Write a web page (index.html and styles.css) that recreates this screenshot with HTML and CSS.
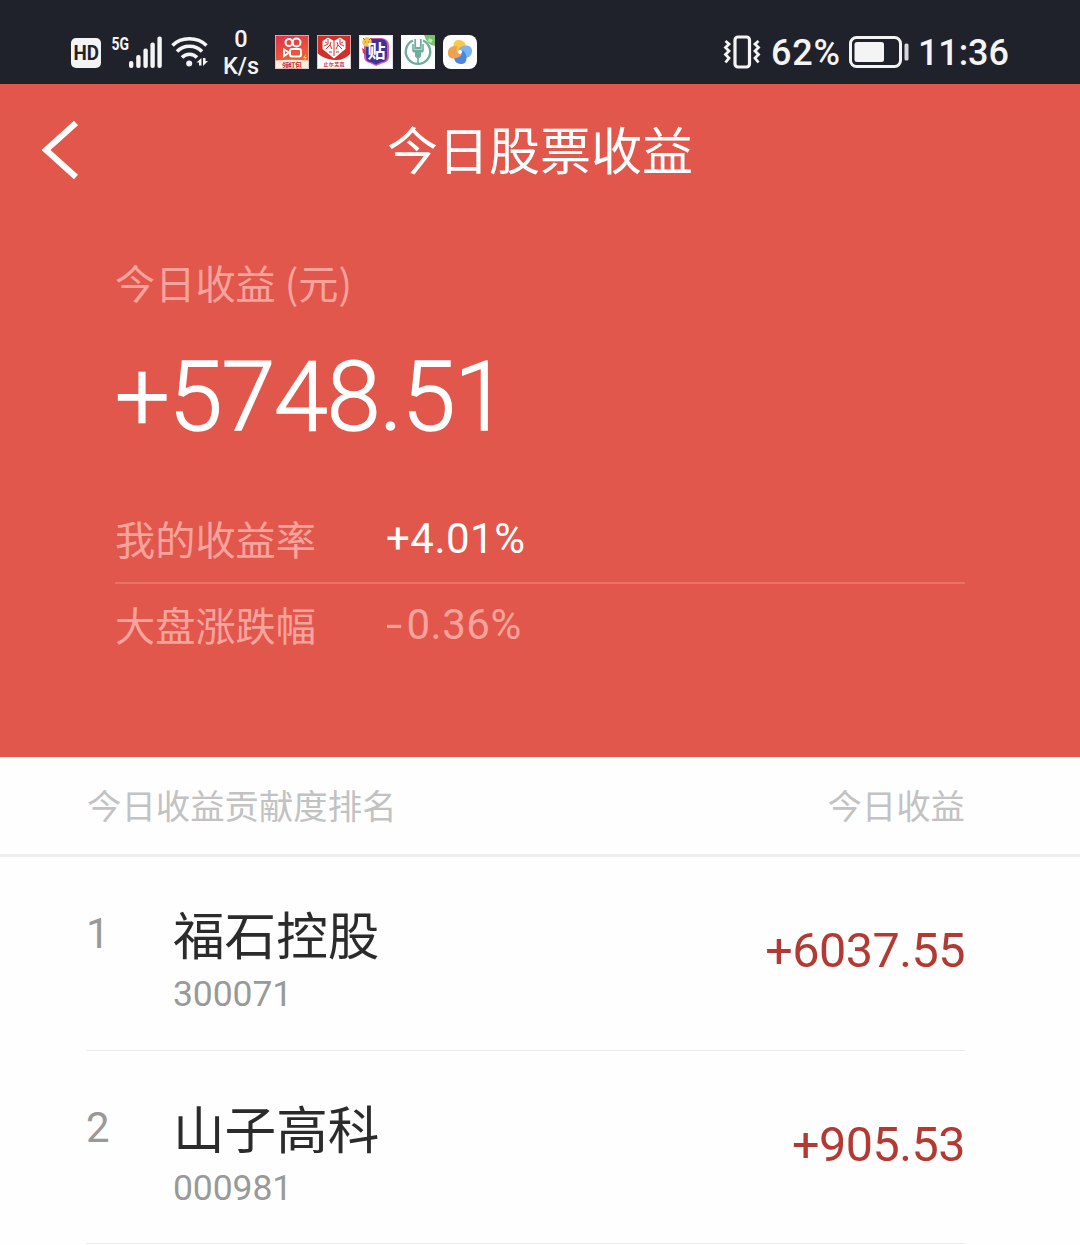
FILE: index.html
```html
<!DOCTYPE html>
<html lang="zh-CN">
<head>
  <meta charset="UTF-8">
  <title>今日股票收益</title>
  <link rel="stylesheet" href="styles.css">
</head>
<body>
  <div class="status-bar">
    <div class="status-left">
      <svg class="hd" width="32" height="32" viewBox="0 0 32 32">
        <rect x="1" y="1" width="30" height="30" rx="5" fill="#f4f4f4"/>
        <text x="3.5" y="23.2" class="hd-text" textLength="25.5" lengthAdjust="spacingAndGlyphs">HD</text>
      </svg>
      <svg class="signal" width="52" height="36" viewBox="0 0 52 36">
        <text x="0.5" y="16" class="net-text" textLength="17.5" lengthAdjust="spacingAndGlyphs">5G</text>
        <g fill="#f4f4f4">
          <rect x="18" y="27" width="4.4" height="7" rx="2"/>
          <rect x="25.2" y="21" width="4.4" height="13" rx="2"/>
          <rect x="32.4" y="14.5" width="4.4" height="19.5" rx="2"/>
          <rect x="39.4" y="8.5" width="4.4" height="25.5" rx="2"/>
          <rect x="46.4" y="2.5" width="4.4" height="31.5" rx="2"/>
        </g>
      </svg>
      <svg class="wifi" width="38" height="34" viewBox="0 0 38 34">
        <g fill="none" stroke="#f4f4f4" stroke-width="3.5">
          <path d="M1.5 10.500C10 1.5 26.500 1.5 35.500 10.500"/>
          <path d="M6 16.500C12.500 9.500 24.500 9.500 31 16.500"/>
          <path d="M11 22.500C15 18 22 18 26 22.500"/>
        </g>
        <circle cx="18.200" cy="28.500" r="3" fill="#f4f4f4"/>
        <path d="M30.500 30.500V23l-5 4.500h2.500v3zM32 23v8l5-5h-2.500v-3z" fill="#f4f4f4"/>
      </svg>
      <div class="speed">
        <span>0</span>
        <span>K/s</span>
      </div>
      <div class="apps">
        <!-- video app -->
        <svg width="34" height="34" viewBox="0 0 34 34">
          <defs>
            <linearGradient id="video" x1="0" y1="0" x2="0.3" y2="1">
              <stop offset="0" stop-color="#df304d"/>
              <stop offset="1" stop-color="#f26a2e"/>
            </linearGradient>
          </defs>
          <rect width="34" height="34" fill="url(#video)"/>
          <path d="M0 25.500Q17 24 34 25.500V34H0z" fill="#fbeedc"/>
          <g fill="none" stroke="#fff" stroke-width="2">
            <circle cx="14" cy="7.500" r="3.500"/>
            <circle cx="21.500" cy="7.500" r="4"/>
            <rect x="15" y="14" width="11" height="7.500" rx="2"/>
            <path d="M14 17.500l-5-3v6.500z"/>
          </g>
          <path d="M31 19l-3 4h2l-1 3 3-4h-2z" fill="#ffd84a"/>
          <text x="7" y="32.500" class="app-text" fill="#c42a25" textLength="20">领红包</text>
          <rect x=".5" y=".5" width="33" height="33" fill="none" stroke="#d9bfc0" stroke-width=".8"/>
        </svg>
        <!-- shopping app -->
        <svg width="34" height="34" viewBox="0 0 34 34">
          <rect width="34" height="34" fill="#d42e2a"/>
          <path d="M0 18Q7 24 17 25T34 18V34H0z" fill="#fff"/>
          <path d="M17 25L3 15V0H31V15z" fill="#d42e2a"/>
          <path d="M17 23.500L5.500 14V6l5.500-3.500 6 3.500 6-3.500 5.500 3.500v8z" fill="#fff"/>
          <path d="M17 6v15M11 4v5l-4 2M23 4v5l4 2M9 14l4-4 2 4M25 14l-4-4-2 4M12 17h3M19 17h3M8 7l2 1M26 7l-2 1M14 7l-1 3M20 7l1 3" fill="none" stroke="#d42e2a" stroke-width="1"/>
          <text x="6.500" y="31" class="app-text small" fill="#b83531" textLength="21">止尔芜芭</text>
          <rect x=".5" y=".5" width="33" height="33" fill="none" stroke="#d9bfc0" stroke-width=".8"/>
        </svg>
        <!-- forum app -->
        <svg width="34" height="34" viewBox="0 0 34 34">
          <rect width="34" height="34" fill="#fff"/>
          <path d="M11 3h12q7 1 7 8v10q0 6-6 7l-7 3-6-3q-6-1-6-7V10q0-6 6-7z" fill="#c85bb5"/>
          <path d="M11 4h11q6 0 6 7v10q0 6-6 6l-5 2.500-5-2.500q-5 0-5-6V11q0-7 4-7z" fill="#423199"/>
          <circle cx="8" cy="7" r="4.800" fill="#f3c74a"/>
          <path d="M4 3l2 2M12 3l-2 2M6 7h1M9 7h1" stroke="#b36f2c" stroke-width="1"/>
          <path d="M3 13l3 2 1 5-3-2z" fill="#db3543"/>
          <text x="8.500" y="22.500" class="forum-text">贴</text>
          <rect x=".5" y=".5" width="33" height="33" fill="none" stroke="#dcdce4" stroke-width=".8"/>
        </svg>
        <!-- bank app -->
        <svg width="34" height="34" viewBox="0 0 34 34">
          <rect width="34" height="34" fill="#fff"/>
          <path d="M23 0h11v11q-8-1-11-11z" fill="#76c26b"/>
          <path d="M28 3l4 2-2 3-3-2z" fill="#c3e8b8"/>
          <g fill="none" stroke="#6fae9f">
            <path d="M12 5.500A12.200 12.200 0 1 0 22 5.500" stroke-width="2.400"/>
            <path d="M14.200 4v9h5.600V4" stroke-width="1.800"/>
            <path d="M12 9v7.500M22 9v7.500M17 17v13" stroke-width="1.600"/>
          </g>
          <path d="M12 14.500h10v3h-2v4l-2 2h-2l-2-2v-4h-2z" fill="#6fae9f"/>
        </svg>
        <!-- pinwheel app -->
        <svg width="34" height="34" viewBox="0 0 34 34">
          <rect width="34" height="34" rx="8" fill="#fff"/>
          <path d="M14.500 19C9 15 9 5.500 15 5C21 4.500 24 9 22.500 14.500Q16 11 14.500 19z" fill="#f6c948"/>
          <path d="M15 14.500C19 9 28.500 9 29 15C29.500 21 25 24 19.500 22.500Q23 16 15 14.500z" fill="#79b5ee"/>
          <path d="M19.500 15C25 19 25 28.500 19 29C13 29.500 10 25 11.500 19.500Q18 23 19.500 15z" fill="#4b86df"/>
          <path d="M19 19.500C15 25 5.500 25 5 19C4.500 13 9 10 14.500 11.500Q11 18 19 19.500z" fill="#efa14f"/>
          <circle cx="17" cy="17" r="1.800" fill="#fff"/>
        </svg>
      </div>
    </div>
    <div class="status-right">
      <svg class="vibrate" width="38" height="34" viewBox="0 0 38 34">
        <g fill="none" stroke="#f4f4f4">
          <rect x="12" y="2" width="14.500" height="30" rx="3" stroke-width="3.200"/>
          <path d="M2.500 6L6 9 2.500 12.500 6 16l-3.500 3.500L6 23l-3.500 4.500M35.500 6L32 9l3.500 3.500L32 16l3.500 3.500L32 23l3.500 4.500" stroke-width="2.800"/>
        </g>
      </svg>
      <span class="battery-text">62%</span>
      <svg class="battery" width="60" height="32" viewBox="0 0 60 32">
        <rect x="1.500" y="1.500" width="50" height="29" rx="6" fill="none" stroke="#f4f4f4" stroke-width="3"/>
        <rect x="5.500" y="6" width="29.500" height="20" rx="2.500" fill="#f4f4f4"/>
        <rect x="55.500" y="7.500" width="4" height="17" rx="1.500" fill="#d8d8dc"/>
      </svg>
      <span class="clock">11:36</span>
    </div>
  </div>

  <div class="summary">
    <div class="title-bar">
      <svg class="back" width="40" height="62" viewBox="0 0 40 62">
        <path d="M36 4L6 31l30 27" fill="none" stroke="#fff" stroke-width="6"/>
      </svg>
      <h1>今日股票收益</h1>
    </div>
    <div class="profit">
      <p class="label">今日收益 (元)</p>
      <p class="total">+5748.51</p>
      <div class="rate">
        <span class="label">我的收益率</span>
        <span class="rate-value">+4.01%</span>
      </div>
      <div class="rate market">
        <span class="label">大盘涨跌幅</span>
        <span class="rate-value"><span class="minus">-</span>0.36%</span>
      </div>
    </div>
  </div>

  <div class="list-header">
    <span>今日收益贡献度排名</span>
    <span>今日收益</span>
  </div>
  <div class="list">
    <div class="stock">
      <span class="rank">1</span>
      <div class="stock-info">
        <div class="stock-name">福石控股</div>
        <div class="stock-code">300071</div>
      </div>
      <span class="stock-profit">+6037.55</span>
    </div>
    <div class="stock">
      <span class="rank">2</span>
      <div class="stock-info">
        <div class="stock-name">山子高科</div>
        <div class="stock-code">000981</div>
      </div>
      <span class="stock-profit">+905.53</span>
    </div>
  </div>
</body>
</html>
```
FILE: styles.css
```css
* {
  box-sizing: border-box;
}

body {
  margin: 0;
  background-color: #fefefe;
  font-family: Roboto, "Noto Sans CJK SC", sans-serif;
  overflow: hidden;
}

h1,
p {
  margin: 0;
  font-weight: 400;
}

svg {
  display: block;
  flex-shrink: 0;
  overflow: visible;
}

/* status bar */
.status-bar {
  display: flex;
  justify-content: space-between;
  height: 84px;
  padding: 20px 72px 0 70px;
  background-color: #1f222b;
  color: #f4f4f4;
}

.status-left,
.status-right {
  display: flex;
  align-items: center;
  height: 64px;
}

.hd {
  margin-top: 2px;
}

.hd-text {
  font-size: 21px;
  font-weight: 700;
  fill: #1f222b;
}

.net-text {
  font-size: 19px;
  font-weight: 700;
  fill: #f4f4f4;
}

.signal {
  margin-left: 9px;
}

.wifi {
  margin-left: 8px;
}

.speed {
  display: flex;
  flex-direction: column;
  align-items: center;
  width: 38px;
  margin-left: 13px;
  padding-top: 1px;
  font-size: 23.5px;
  font-weight: 500;
  line-height: 27px;
}

.apps {
  display: flex;
  gap: 8px;
  margin-left: 15px;
}

.app-text {
  font-family: "Noto Sans CJK SC", sans-serif;
  font-size: 7px;
  font-weight: 700;
}

.app-text.small {
  font-size: 5px;
}

.forum-text {
  font-family: "Noto Sans CJK SC", sans-serif;
  font-size: 18px;
  font-weight: 700;
  fill: #fff;
}

.battery-text,
.clock {
  font-size: 36px;
  font-weight: 500;
  line-height: 40px;
}

.battery-text {
  width: 70px;
  margin-left: 10px;
  padding-top: 2px;
  letter-spacing: 0.8px;
}

.battery {
  margin-left: 8px;
}

.clock {
  width: 90px;
  margin-left: 9px;
  padding-top: 2px;
  letter-spacing: -0.1px;
}

/* red summary block */
.summary {
  height: 673px;
  background-color: #e2574c;
  color: #fff;
}

.title-bar {
  display: flex;
  align-items: center;
  height: 132px;
  padding: 0 40px;
}

.title-bar h1 {
  flex: 1;
  margin-right: 40px;
  padding-bottom: 4px;
  font-family: "Noto Sans CJK SC", sans-serif;
  font-size: 51px;
  line-height: 60px;
  text-align: center;
}

.profit {
  padding: 36px 115px 0;
}

.label {
  font-family: "Noto Sans CJK SC", sans-serif;
  font-size: 40.2px;
  line-height: 60px;
  color: #f9a39d;
}

.total {
  margin-top: 25px;
  font-size: 97px;
  font-weight: 300;
  line-height: 120px;
  letter-spacing: -1.1px;
  -webkit-text-stroke: 1.4px #fff;
}

.rate {
  display: flex;
  align-items: center;
  height: 88px;
  margin-top: 39px;
  border-bottom: 2px solid #e8726a;
}

.rate .label {
  width: 271px;
  padding-bottom: 2px;
}

.rate-value {
  font-size: 42px;
  line-height: 60px;
  letter-spacing: 0.5px;
}

.market {
  height: 82px;
  margin-top: 0;
  border-bottom: none;
  color: #f9a39d;
}

.minus {
  display: inline-block;
  width: 20.5px;
  transform: scaleX(1.4);
  transform-origin: left;
}

/* stock list */
.list-header {
  display: flex;
  justify-content: space-between;
  align-items: center;
  height: 100px;
  padding: 0 115px 4px 87px;
  border-bottom: 3px solid #ededed;
  font-family: "Noto Sans CJK SC", sans-serif;
  font-size: 34.4px;
  color: #c2c2c2;
}

.list {
  padding: 0 115px 0 86px;
}

.stock {
  display: flex;
  height: 194px;
  border-bottom: 1px solid #ececec;
}

.stock + .stock {
  height: 193px;
}

.rank {
  width: 87px;
  margin-top: 47px;
  font-size: 42px;
  line-height: 60px;
  color: #999;
}

.stock-info {
  flex: 1;
  padding-top: 41px;
}

.stock-name {
  font-family: "Noto Sans CJK SC", sans-serif;
  font-size: 51.6px;
  line-height: 70px;
  color: #2b2b2b;
}

.stock-code {
  margin-top: 5px;
  font-size: 35.5px;
  line-height: 42px;
  letter-spacing: -0.1px;
  color: #999;
}

.stock-profit {
  margin-top: 64px;
  font-size: 48.5px;
  line-height: 60px;
  letter-spacing: -0.5px;
  color: #b33a32;
}
```
